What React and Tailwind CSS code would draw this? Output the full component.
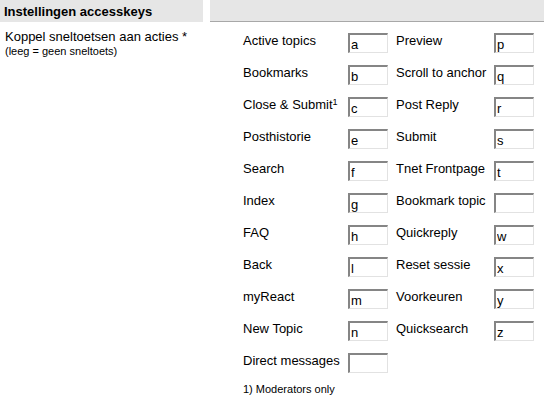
const left = [
  ["Active topics", "a"],
  ["Bookmarks", "b"],
  ["Close & Submit", "c", true],
  ["Posthistorie", "e"],
  ["Search", "f"],
  ["Index", "g"],
  ["FAQ", "h"],
  ["Back", "l"],
  ["myReact", "m"],
  ["New Topic", "n"],
  ["Direct messages", ""],
];

const right = [
  ["Preview", "p"],
  ["Scroll to anchor", "q"],
  ["Post Reply", "r"],
  ["Submit", "s"],
  ["Tnet Frontpage", "t"],
  ["Bookmark topic", ""],
  ["Quickreply", "w"],
  ["Reset sessie", "x"],
  ["Voorkeuren", "y"],
  ["Quicksearch", "z"],
];

const KeyInput = ({ value }) => (
  <input
    readOnly
    value={value}
    className="h-[20px] w-[40px] border-t-2 border-l-2 border-b border-r border-t-[#858585] border-l-[#858585] border-b-[#e2e2e2] border-r-[#e2e2e2] bg-white px-[1px] pt-[1px] text-[13px] leading-none text-black outline-none"
  />
);

export default function App() {
  return (
    <div className="flex h-[400px] w-[544px] bg-white font-['Liberation_Sans',Arial,sans-serif] text-[13px] text-black">
      <div className="w-[203px]">
        <div className="h-[22px] bg-[#e6e6e6] pl-[4px] pt-[2px] text-[13px] font-bold">Instellingen accesskeys</div>
        <div className="pl-[5px] pt-[7px]">
          <p className="leading-[16px]">Koppel sneltoetsen aan acties *</p>
          <p className="text-[11px] leading-[13px]">(leeg = geen sneltoets)</p>
        </div>
      </div>
      <div className="ml-[7px] flex-1">
        <div className="h-[22px] border-b border-[#a8a8a8] bg-[#e6e6e6]" />
        <div className="pl-[33px] pt-[5px]">
          {left.map(([label, key, sup], i) => (
            <div key={label} className="flex h-[32px] items-center">
              <span className="w-[105px] -mt-[4px]">
                {label}
                {sup && <sup className="text-[9px]">1</sup>}
              </span>
              <KeyInput value={key} />
              {right[i] && (
                <>
                  <span className="ml-[8px] w-[98px] -mt-[4px]">{right[i][0]}</span>
                  <KeyInput value={right[i][1]} />
                </>
              )}
            </div>
          ))}
          <p className="mt-[2px] text-[11px]">1) Moderators only</p>
        </div>
      </div>
    </div>
  );
}
